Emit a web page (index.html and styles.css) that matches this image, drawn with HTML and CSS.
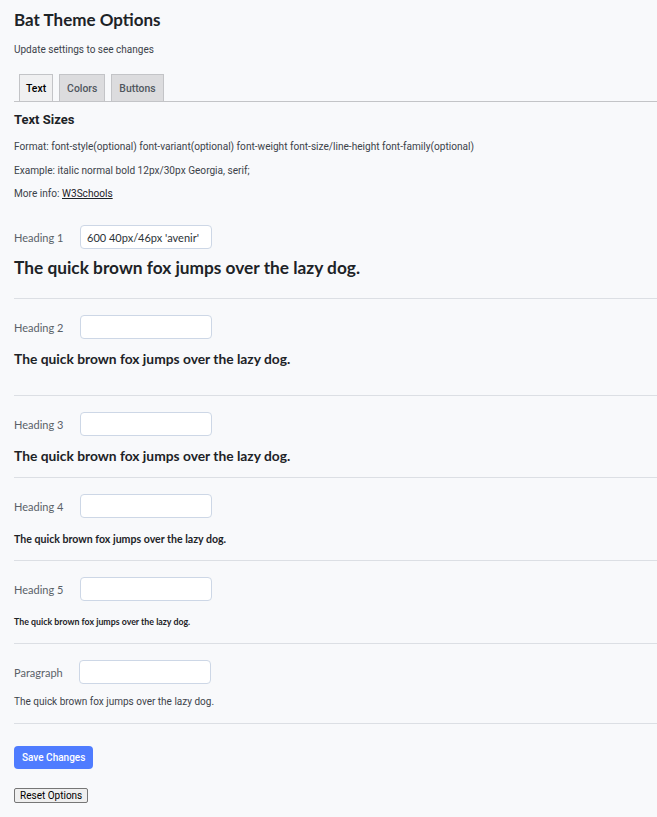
FILE: index.html
```html
<!DOCTYPE html>
<html>
<head>
<meta charset="utf-8">
<link rel="stylesheet" href="styles.css">
</head>
<body>
<div class="wrap">
  <h1 class="title">Bat Theme Options</h1>
  <p class="subtitle">Update settings to see changes</p>
  <nav class="tabs">
    <span class="tab active">Text</span>
    <span class="tab">Colors</span>
    <span class="tab">Buttons</span>
  </nav>
  <h2 class="section-title">Text Sizes</h2>
  <p class="info">Format: font-style(optional) font-variant(optional) font-weight font-size/line-height font-family(optional)</p>
  <p class="info">Example: italic normal bold 12px/30px Georgia, serif;</p>
  <p class="info">More info: <a href="#">W3Schools</a></p>

  <div class="field s1">
    <div class="row"><label class="lbl">Heading 1</label><input class="inp" type="text" value="600 40px/46px 'avenir'"></div>
    <div class="sample h1s">The quick brown fox jumps over the lazy dog.</div>
  </div>
  <div class="field s2">
    <div class="row"><label class="lbl">Heading 2</label><input class="inp" type="text"></div>
    <div class="sample h2s">The quick brown fox jumps over the lazy dog.</div>
  </div>
  <div class="field s3">
    <div class="row"><label class="lbl">Heading 3</label><input class="inp" type="text"></div>
    <div class="sample h3s">The quick brown fox jumps over the lazy dog.</div>
  </div>
  <div class="field s4">
    <div class="row"><label class="lbl">Heading 4</label><input class="inp" type="text"></div>
    <div class="sample h4s">The quick brown fox jumps over the lazy dog.</div>
  </div>
  <div class="field s5">
    <div class="row"><label class="lbl">Heading 5</label><input class="inp" type="text"></div>
    <div class="sample h5s">The quick brown fox jumps over the lazy dog.</div>
  </div>
  <div class="field s6">
    <div class="row"><label class="lbl lbl-p">Paragraph</label><input class="inp" type="text"></div>
    <div class="sample ps">The quick brown fox jumps over the lazy dog.</div>
  </div>

  <div class="actions">
    <button class="save">Save Changes</button>
    <button class="reset">Reset Options</button>
  </div>
</div>
</body>
</html>
```
FILE: styles.css
```css
html, body {
  margin: 0;
  padding: 0;
  background: #f8f9fb;
}
body {
  font-family: "Lato", "Noto Sans", sans-serif;
  color: #1d2327;
}
.wrap {
  padding: 10px 0 0 14px;
}
.title {
  margin: 0;
  font-size: 17px;
  line-height: 20px;
  font-weight: 700;
  color: #1d2327;
}
.subtitle {
  margin: 14px 0 0;
  font-family: "Roboto", sans-serif;
  font-size: 10px;
  line-height: 12px;
  color: #3c434a;
}
.tabs {
  display: flex;
  gap: 6px;
  margin-top: 18px;
  padding-left: 5px;
  border-bottom: 1px solid #c3c4c7;
  height: 27px;
  align-items: flex-end;
}
.tab {
  box-sizing: border-box;
  height: 27px;
  padding: 0 7px;
  display: flex;
  align-items: center;
  font-family: "Roboto", sans-serif;
  font-size: 10.4px;
  font-weight: 500;
  color: #50575e;
  background: #dcdcde;
  border: 1px solid #c3c4c7;
  border-bottom: none;
}
.tab.active {
  padding: 0 6px;
  background: #f0f0f1;
  color: #000;
}
.section-title {
  margin: 10px 0 0;
  font-family: "Roboto", sans-serif;
  font-size: 13px;
  line-height: 16px;
  font-weight: 700;
  color: #1d2327;
}
.info {
  margin: 13px 0 0;
  font-family: "Roboto", sans-serif;
  font-size: 10.1px;
  line-height: 12px;
  color: #3c434a;
}
.info + .info { margin-top: 12px; }
.info + .info + .info { margin-top: 11px; }
.info a { color: #1d2327; }
.field {
  padding-top: 16px;
  border-bottom: 1px solid #dcdfe4;
}
.s1 { padding-top: 25px; }
.row {
  display: flex;
  align-items: center;
  height: 24px;
}
.lbl {
  width: 66px;
  font-family: "Lato", sans-serif;
  font-size: 11px;
  color: #5a6168;
}
.lbl-p { width: 65px; }
.inp {
  box-sizing: border-box;
  width: 132px;
  height: 24px;
  margin: 0;
  padding: 0 6px;
  border: 1px solid #cdd7e6;
  border-radius: 4px;
  background: #fff;
  font-family: "Lato", sans-serif;
  font-size: 11px;
  color: #2c3338;
  outline: none;
}
.sample {
  font-family: "Lato", sans-serif;
  font-weight: 700;
  color: #1d2327;
}
.h1s { font-size: 17.3px; line-height: 24px; margin: 7px 0 18px; }
.h2s { font-size: 13.8px; line-height: 20px; margin: 10px 0 26px; }
.h3s { font-size: 13.8px; line-height: 20px; margin: 10px 0 11px; }
.h4s { font-size: 10.6px; line-height: 16px; margin: 13px 0 13px; }
.h5s { font-size: 8.8px; line-height: 12px; margin: 15px 0 15px; }
.ps {
  font-family: "Roboto", sans-serif;
  font-weight: 400;
  font-size: 10px;
  line-height: 12px;
  color: #3c434a;
  margin: 12px 0 15px;
}
.actions {
  display: flex;
  flex-direction: column;
  align-items: flex-start;
  padding-top: 22px;
}
.save {
  height: 23px;
  padding: 0 8px;
  border: none;
  border-radius: 4px;
  background: #4f7cff;
  color: #fff;
  font-family: "Roboto", sans-serif;
  font-size: 10px;
  font-weight: 500;
}
.reset {
  margin-top: 19px;
  height: 15px;
  padding: 0 5px;
  border: 1px solid #767676;
  border-radius: 2px;
  background: #efefef;
  color: #000;
  font-family: "Roboto", sans-serif;
  font-size: 10px;
  line-height: 12px;
}
```
